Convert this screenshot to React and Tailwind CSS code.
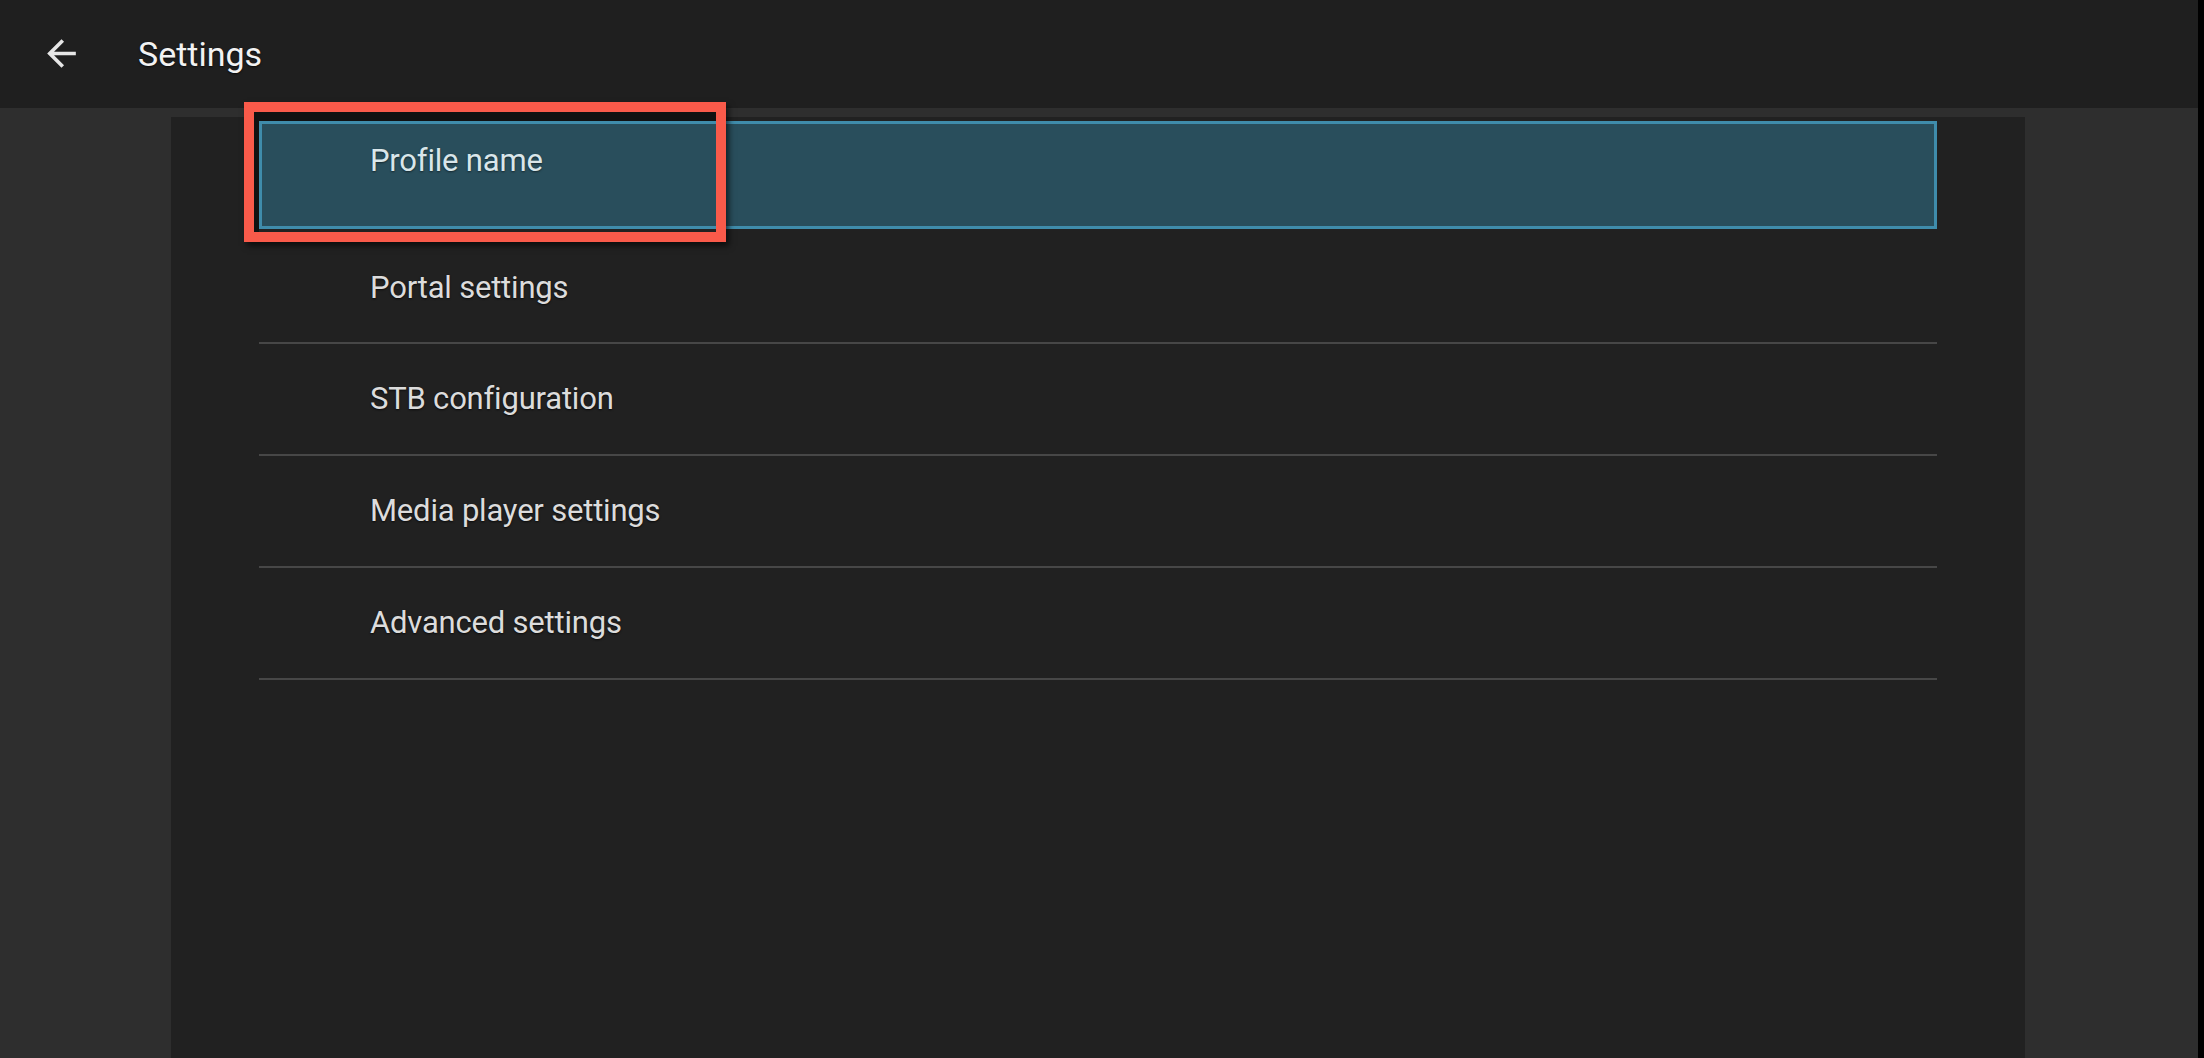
const items = ['Portal settings', 'STB configuration', 'Media player settings', 'Advanced settings']

function BackArrow() {
  return (
    <svg width="43" height="43" viewBox="0 0 24 24" fill="#e6e6e6">
      <path d="M20 11H7.83l5.59-5.59L12 4l-8 8 8 8 1.41-1.41L7.83 13H20v-2z" />
    </svg>
  )
}

export default function App() {
  return (
    <div className="w-[2204px] h-[1058px] flex overflow-hidden bg-black font-['Roboto',sans-serif]">
      <div className="w-[2198px] h-full flex flex-col">
        {/* top bar */}
        <header className="h-[108px] shrink-0 bg-[#1f1f1f] flex items-center">
          <div className="ml-[40px] mt-[-2px]">
            <BackArrow />
          </div>
          <h1 className="ml-[55px] text-[34px] text-[#f2f2f2] [text-shadow:0_1px_2px_rgba(0,0,0,0.7)]">Settings</h1>
        </header>

        <div className="flex-1 bg-[#2e2e2e] flex pt-[9px]">
          <div className="ml-[171px] w-[1854px] bg-[#212121] px-[88px] pt-[4px]">
            <div className="relative">
              <div className="h-[108px] border-[3px] border-[#3f8cab] bg-[#294e5c] pl-[108px] pt-[17px]">
                <span className="block text-[31px] leading-[40px] text-[#d9e6ea] tracking-[-0.2px] [text-shadow:0_1px_2px_rgba(0,0,0,0.5)]">Profile name</span>
              </div>

              {items.map((label, i) => (
                <div
                  key={label}
                  className={`${i === 0 ? 'h-[108px] pt-[5px]' : 'h-[110px]'} box-content border-b-2 border-[#474747] flex items-center pl-[111px]`}
                >
                  <span className="text-[31px] text-[#dcdcdc] tracking-[-0.2px] [text-shadow:0_1px_2px_rgba(0,0,0,0.7)]">{label}</span>
                </div>
              ))}

              {/* annotation highlight */}
              <div className="absolute left-[-15px] top-[-19px] w-[482px] h-[140px] border-[10px] border-[#f95a4a] shadow-[inset_5px_9px_0_0_#111,3px_4px_6px_rgba(0,0,0,0.6)]" />
            </div>
          </div>
        </div>
      </div>
    </div>
  )
}
